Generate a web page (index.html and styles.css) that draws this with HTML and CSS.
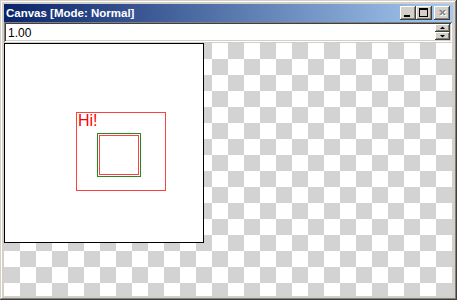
FILE: index.html
```html
<!DOCTYPE html>
<html lang="en">
<head>
  <meta charset="UTF-8">
  <meta name="viewport" content="width=device-width, initial-scale=1.0">
  <title>Canvas</title>
  <link rel="stylesheet" href="styles.css">
</head>
<body>

<div class="window">
  <div class="titlebar">
    <span class="title">Canvas [Mode: Normal]</span>
    <div class="caption-buttons">
      <button class="cap-btn" title="Minimize">
        <svg width="16" height="14" viewBox="0 0 16 14"><rect x="4" y="9" width="6" height="2" fill="#000"/></svg>
      </button>
      <button class="cap-btn" title="Maximize">
        <svg width="16" height="14" viewBox="0 0 16 14">
          <rect x="3" y="2" width="9" height="2" fill="#000"/>
          <rect x="3" y="2" width="1" height="9" fill="#000"/>
          <rect x="11" y="2" width="1" height="9" fill="#000"/>
          <rect x="3" y="10" width="9" height="1" fill="#000"/>
        </svg>
      </button>
      <button class="cap-btn close" title="Close">
        <svg width="16" height="14" viewBox="0 0 16 14">
          <path d="M5 4h2l1.5 1.5L10 4h2l-2.5 2.5L12 9h-2L8.5 7.5 7 9H5l2.5-2.5z" fill="#fff" transform="translate(1 1)"/>
          <path d="M5 4h2l1.5 1.5L10 4h2l-2.5 2.5L12 9h-2L8.5 7.5 7 9H5l2.5-2.5z" fill="#808080"/>
        </svg>
      </button>
    </div>
  </div>

  <div class="zoom-row">
    <div class="zoom-field">
      <span class="zoom-value">1.00</span>
      <div class="spinner">
        <button class="spin">
          <svg width="15" height="8" viewBox="0 0 15 8"><path d="M5 5h5L7.5 2.5z" fill="#000"/></svg>
        </button>
        <button class="spin">
          <svg width="15" height="8" viewBox="0 0 15 8"><path d="M5 3h5L7.5 5.5z" fill="#000"/></svg>
        </button>
      </div>
    </div>
  </div>

  <div class="canvas-area">
    <div class="canvas">
      <div class="shape frame"><span class="label">Hi!</span></div>
      <div class="shape green-box"></div>
      <div class="shape inner-box"></div>
    </div>
  </div>
</div>

</body>
</html>
```

FILE: styles.css
```css
body {
  margin: 0;
  padding: 0;
  background-color: #d4d0c8;
  font-family: "Liberation Sans", Arial, sans-serif;
}
.window {
  width: 457px;
  height: 300px;
  box-sizing: border-box;
  padding: 4px;
  background-color: #d4d0c8;
  box-shadow: inset -1px -1px #404040, inset 1px 1px #d4d0c8,
              inset -2px -2px #808080, inset 2px 2px #fff;
  display: flex;
  flex-direction: column;
}
.titlebar {
  height: 18px;
  display: flex;
  align-items: center;
  padding: 0 3px 0 2px;
  background: linear-gradient(to right, #0a246a, #a6caf0);
}
.title {
  flex: 1;
  color: #fff;
  font-size: 11.5px;
  font-weight: bold;
  white-space: nowrap;
}
.caption-buttons {
  display: flex;
}
.cap-btn {
  width: 16px;
  height: 14px;
  padding: 0;
  border: none;
  background-color: #d4d0c8;
  box-shadow: inset -1px -1px #404040, inset 1px 1px #fff,
              inset -2px -2px #808080;
}
.cap-btn svg {
  display: block;
}
.cap-btn.close {
  margin-left: 2px;
}
.zoom-row {
  height: 21px;
  padding-right: 1px;
}
.zoom-field {
  height: 20px;
  box-sizing: border-box;
  padding: 2px 2px 2px 4px;
  background-color: #fff;
  box-shadow: inset 1px 1px #808080, inset -1px -1px #fff,
              inset 2px 2px #404040, inset -2px -2px #d4d0c8;
  display: flex;
  align-items: center;
}
.zoom-value {
  flex: 1;
  font-size: 12px;
  padding-top: 2px;
  color: #000;
}
.spinner {
  display: flex;
  flex-direction: column;
}
.spin {
  width: 15px;
  height: 8px;
  padding: 0;
  border: none;
  background-color: #d4d0c8;
  box-shadow: inset -1px -1px #404040, inset 1px 1px #fff,
              inset -2px -2px #808080;
}
.spin svg {
  display: block;
}
.canvas-area {
  flex: 1;
  margin-right: 1px;
  background: repeating-conic-gradient(#fff 0 25%, #d3d3d3 0 50%) 0 0 / 32px 32px;
}
.canvas {
  position: relative;
  width: 200px;
  height: 200px;
  box-sizing: border-box;
  background-color: #fff;
  border: 1px solid #000;
}
.shape {
  position: absolute;
  box-sizing: border-box;
}
.frame {
  left: 71px;
  top: 68px;
  width: 90px;
  height: 79px;
  border: 1px solid #ff4040;
  padding-left: 1px;
}
.label {
  display: block;
  color: #ff0000;
  font-size: 16px;
  line-height: 16px;
}
.green-box {
  left: 92px;
  top: 89px;
  width: 44px;
  height: 44px;
  border: 1px solid #228b22;
}
.inner-box {
  left: 94px;
  top: 91px;
  width: 40px;
  height: 40px;
  border: 1px solid #ff4040;
}
```
